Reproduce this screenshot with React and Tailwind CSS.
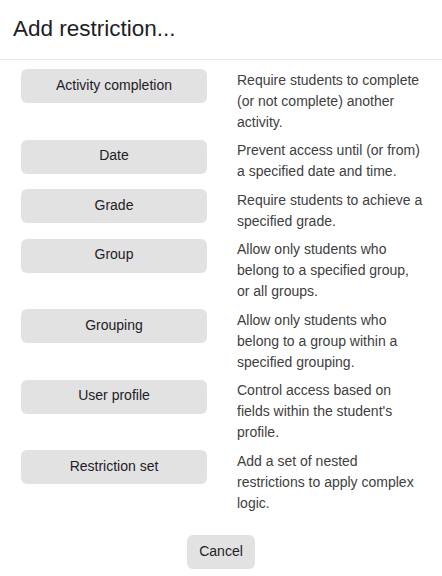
import React from 'react'

const OPTIONS = [
  { label: 'Activity completion', desc: 'Require students to complete (or not complete) another activity.' },
  { label: 'Date', desc: 'Prevent access until (or from) a specified date and time.' },
  { label: 'Grade', desc: 'Require students to achieve a specified grade.' },
  { label: 'Group', desc: 'Allow only students who belong to a specified group, or all groups.' },
  { label: 'Grouping', desc: 'Allow only students who belong to a group within a specified grouping.' },
  { label: 'User profile', desc: "Control access based on fields within the student's profile." },
  { label: 'Restriction set', desc: 'Add a set of nested restrictions to apply complex logic.' },
]

export default function App() {
  return (
    <div className="w-[442px] h-[576px] bg-white overflow-hidden" style={{ fontFamily: '"Liberation Sans", Arial, sans-serif' }}>
      <div className="h-[60px] border-b border-[#e6e6e6] pl-[13px] pt-[14px]">
        <h1 className="text-[22.5px] leading-[29px] text-[#1d2125]">Add restriction...</h1>
      </div>

      <div className="pt-[8px] flex flex-col gap-[6px]">
        {OPTIONS.map(o => (
          <div key={o.label} className="flex items-start">
            <div className="pl-[21px] pt-[1px] w-[237px] shrink-0">
              <button className="w-[186px] h-[34px] rounded-[6px] bg-[#e2e2e2] text-[14px] text-[#1d2125] pb-[2px]">
                {o.label}
              </button>
            </div>
            <p className="w-[187px] pt-[1.5px] text-[14px] leading-[21px] text-[#404040]">{o.desc}</p>
          </div>
        ))}
      </div>

      <div className="flex justify-center pt-[21px]">
        <button className="w-[68px] h-[34px] rounded-[6px] bg-[#e2e2e2] text-[14px] text-[#1d2125]">Cancel</button>
      </div>
    </div>
  )
}
